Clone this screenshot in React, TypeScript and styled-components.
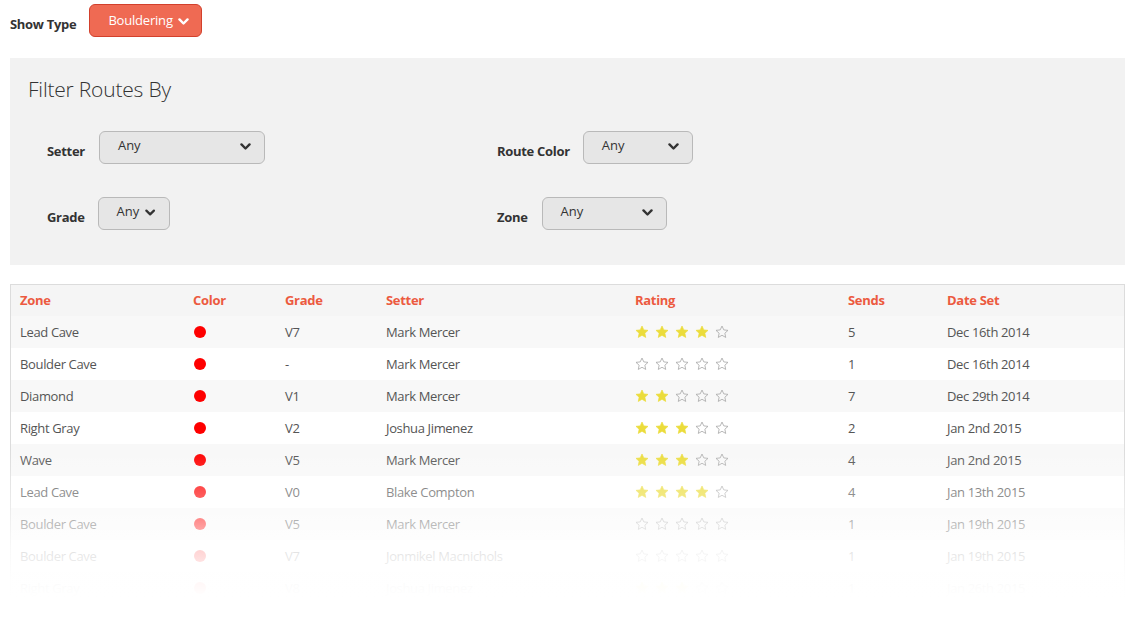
import React from "react";
import styled, { createGlobalStyle } from "styled-components";

const GlobalStyle = createGlobalStyle`
  html, body { margin: 0; padding: 0; background: #fff; }
  body { font-family: "Open Sans", "Liberation Sans", sans-serif; color: #555; }
  * { box-sizing: border-box; }
`;

const Page = styled.div`
  width: 1133px;
  height: 636px;
  padding: 4px 8px 0 10px;
  overflow: hidden;
`;

const TopBar = styled.div`
  display: flex;
  align-items: center;
  gap: 13px;
  height: 33px;
`;

const Label = styled.span`
  font-size: 13px;
  font-weight: 700;
  color: #333;
  white-space: nowrap;
  letter-spacing: -0.3px;
`;

const TopLabel = styled(Label)`
  padding-top: 6px;
`;

const TypeButton = styled.button`
  display: flex;
  align-items: center;
  gap: 5px;
  height: 33px;
  width: 113px;
  padding: 0 0 2px 18px;
  border: 1px solid #d2402c;
  border-radius: 6px;
  background: #ef6a53;
  color: #fff;
  font-family: inherit;
  font-size: 13px;
  letter-spacing: -0.2px;
  cursor: pointer;
`;

const Panel = styled.div`
  margin-top: 21px;
  height: 207px;
  background: #f2f2f2;
  padding: 16px 18px 0 18px;
`;

const PanelTitle = styled.h2`
  margin: 0;
  font-size: 21px;
  font-weight: 300;
  color: #333;
  line-height: 30px;
  letter-spacing: -0.2px;
`;

const FilterGrid = styled.div`
  display: grid;
  grid-template-columns: 450px 1fr;
  row-gap: 33px;
  margin-top: 27px;
  padding-left: 19px;
`;

const FilterItem = styled.div<{ $gap: number }>`
  display: flex;
  align-items: center;
  gap: ${(p) => p.$gap}px;
`;

const FilterLabel = styled(Label)`
  padding-top: 7px;
`;

const Select = styled.div<{ $w: number }>`
  display: flex;
  align-items: center;
  justify-content: space-between;
  width: ${(p) => p.$w}px;
  height: 33px;
  padding: 0 13px 2px 18px;
  border: 1px solid #b9b9b9;
  border-radius: 6px;
  background: #e6e6e6;
  font-size: 13px;
  color: #333;
`;

const SelectCompact = styled(Select)`
  justify-content: flex-start;
  gap: 6px;
`;

const SelectText = styled.span`
  margin-top: -4px;
`;

const TableWrap = styled.div`
  position: relative;
  margin-top: 19px;
  height: 330px;
  overflow: hidden;
`;

const Table = styled.div`
  border: 1px solid #dcdcdc;
  border-bottom: none;
`;

const cols = "173px 92px 101px 249px 213px 99px 1fr";

const HeaderRow = styled.div`
  display: grid;
  grid-template-columns: ${cols};
  height: 31px;
  padding-bottom: 2px;
  align-items: center;
  background: #f5f5f5;
`;

const HeadCell = styled.div`
  padding-left: 9px;
  font-size: 13px;
  font-weight: 700;
  color: #ec5a40;
  letter-spacing: -0.3px;
`;

const Row = styled.div<{ $striped: boolean }>`
  display: grid;
  grid-template-columns: ${cols};
  height: 32px;
  align-items: center;
  background: ${(p) => (p.$striped ? "#f8f8f8" : "#fff")};
`;

const Cell = styled.div`
  padding-left: 9px;
  font-size: 13px;
  color: #555;
  white-space: nowrap;
  letter-spacing: -0.35px;
`;

const Dot = styled.span`
  display: block;
  width: 12px;
  height: 12px;
  border-radius: 50%;
  background: #fe0000;
  margin-left: 1px;
`;

const Stars = styled.div`
  display: flex;
  gap: 6px;
  align-items: center;
`;

const Fade = styled.div`
  position: absolute;
  left: -2px;
  right: -2px;
  bottom: 0;
  height: 165px;
  background: linear-gradient(
    to bottom,
    rgba(255, 255, 255, 0) 0%,
    rgba(255, 255, 255, 0.5) 40%,
    rgba(255, 255, 255, 0.82) 60%,
    rgba(255, 255, 255, 0.96) 78%,
    #fff 90%
  );
  pointer-events: none;
`;

const Chevron = ({ color = "#333", size = 11 }: { color?: string; size?: number }) => (
  <svg width={size} height={size * 0.7} viewBox="0 0 12 8.4" style={{ display: "block" }}>
    <polyline
      points="1.6,1.6 6,6 10.4,1.6"
      fill="none"
      stroke={color}
      strokeWidth={2.6}
      strokeLinecap="round"
      strokeLinejoin="round"
    />
  </svg>
);

const Star = ({ filled }: { filled: boolean }) => (
  <svg width="14" height="14" viewBox="0 0 24 24" style={{ display: "block" }}>
    <polygon
      points="12,1.8 15.1,8.4 22.3,9.2 16.9,14.1 18.4,21.3 12,17.6 5.6,21.3 7.1,14.1 1.7,9.2 8.9,8.4"
      fill={filled ? "#ebdc3c" : "none"}
      stroke={filled ? "#ebdc3c" : "#a8a8a8"}
      strokeWidth={filled ? 1.2 : 1.4}
      strokeLinejoin="round"
    />
  </svg>
);

type Route = {
  zone: string;
  grade: string;
  setter: string;
  rating: number;
  sends: number;
  date: string;
};

const routes: Route[] = [
  { zone: "Lead Cave", grade: "V7", setter: "Mark Mercer", rating: 4, sends: 5, date: "Dec 16th 2014" },
  { zone: "Boulder Cave", grade: "-", setter: "Mark Mercer", rating: 0, sends: 1, date: "Dec 16th 2014" },
  { zone: "Diamond", grade: "V1", setter: "Mark Mercer", rating: 2, sends: 7, date: "Dec 29th 2014" },
  { zone: "Right Gray", grade: "V2", setter: "Joshua Jimenez", rating: 3, sends: 2, date: "Jan 2nd 2015" },
  { zone: "Wave", grade: "V5", setter: "Mark Mercer", rating: 3, sends: 4, date: "Jan 2nd 2015" },
  { zone: "Lead Cave", grade: "V0", setter: "Blake Compton", rating: 4, sends: 4, date: "Jan 13th 2015" },
  { zone: "Boulder Cave", grade: "V5", setter: "Mark Mercer", rating: 0, sends: 1, date: "Jan 19th 2015" },
  { zone: "Boulder Cave", grade: "V7", setter: "Jonmikel Macnichols", rating: 0, sends: 1, date: "Jan 19th 2015" },
  { zone: "Right Gray", grade: "V8", setter: "Joshua Jimenez", rating: 3, sends: 1, date: "Jan 26th 2015" },
];

const headers = ["Zone", "Color", "Grade", "Setter", "Rating", "Sends", "Date Set"];

export default function App() {
  return (
    <>
      <GlobalStyle />
      <Page>
        <TopBar>
          <TopLabel>Show Type</TopLabel>
          <TypeButton>
            Bouldering
            <span style={{ marginTop: 5 }}>
              <Chevron color="#fff" size={11} />
            </span>
          </TypeButton>
        </TopBar>

        <Panel>
          <PanelTitle>Filter Routes By</PanelTitle>
          <FilterGrid>
            <FilterItem $gap={14}>
              <FilterLabel>Setter</FilterLabel>
              <Select $w={166}>
                <SelectText>Any</SelectText>
                <Chevron />
              </Select>
            </FilterItem>
            <FilterItem $gap={13}>
              <FilterLabel>Route Color</FilterLabel>
              <Select $w={110}>
                <SelectText>Any</SelectText>
                <Chevron />
              </Select>
            </FilterItem>
            <FilterItem $gap={13}>
              <FilterLabel>Grade</FilterLabel>
              <SelectCompact $w={72}>
                <SelectText>Any</SelectText>
                <Chevron />
              </SelectCompact>
            </FilterItem>
            <FilterItem $gap={14}>
              <FilterLabel>Zone</FilterLabel>
              <Select $w={125}>
                <SelectText>Any</SelectText>
                <Chevron />
              </Select>
            </FilterItem>
          </FilterGrid>
        </Panel>

        <TableWrap>
          <Table>
            <HeaderRow>
              {headers.map((h) => (
                <HeadCell key={h}>{h}</HeadCell>
              ))}
            </HeaderRow>
            {routes.map((r, i) => (
              <Row key={i} $striped={i % 2 === 0}>
                <Cell>{r.zone}</Cell>
                <Cell>
                  <Dot />
                </Cell>
                <Cell>{r.grade}</Cell>
                <Cell>{r.setter}</Cell>
                <Cell>
                  <Stars>
                    {[0, 1, 2, 3, 4].map((s) => (
                      <Star key={s} filled={s < r.rating} />
                    ))}
                  </Stars>
                </Cell>
                <Cell>{r.sends}</Cell>
                <Cell>{r.date}</Cell>
              </Row>
            ))}
          </Table>
          <Fade />
        </TableWrap>
      </Page>
    </>
  );
}
